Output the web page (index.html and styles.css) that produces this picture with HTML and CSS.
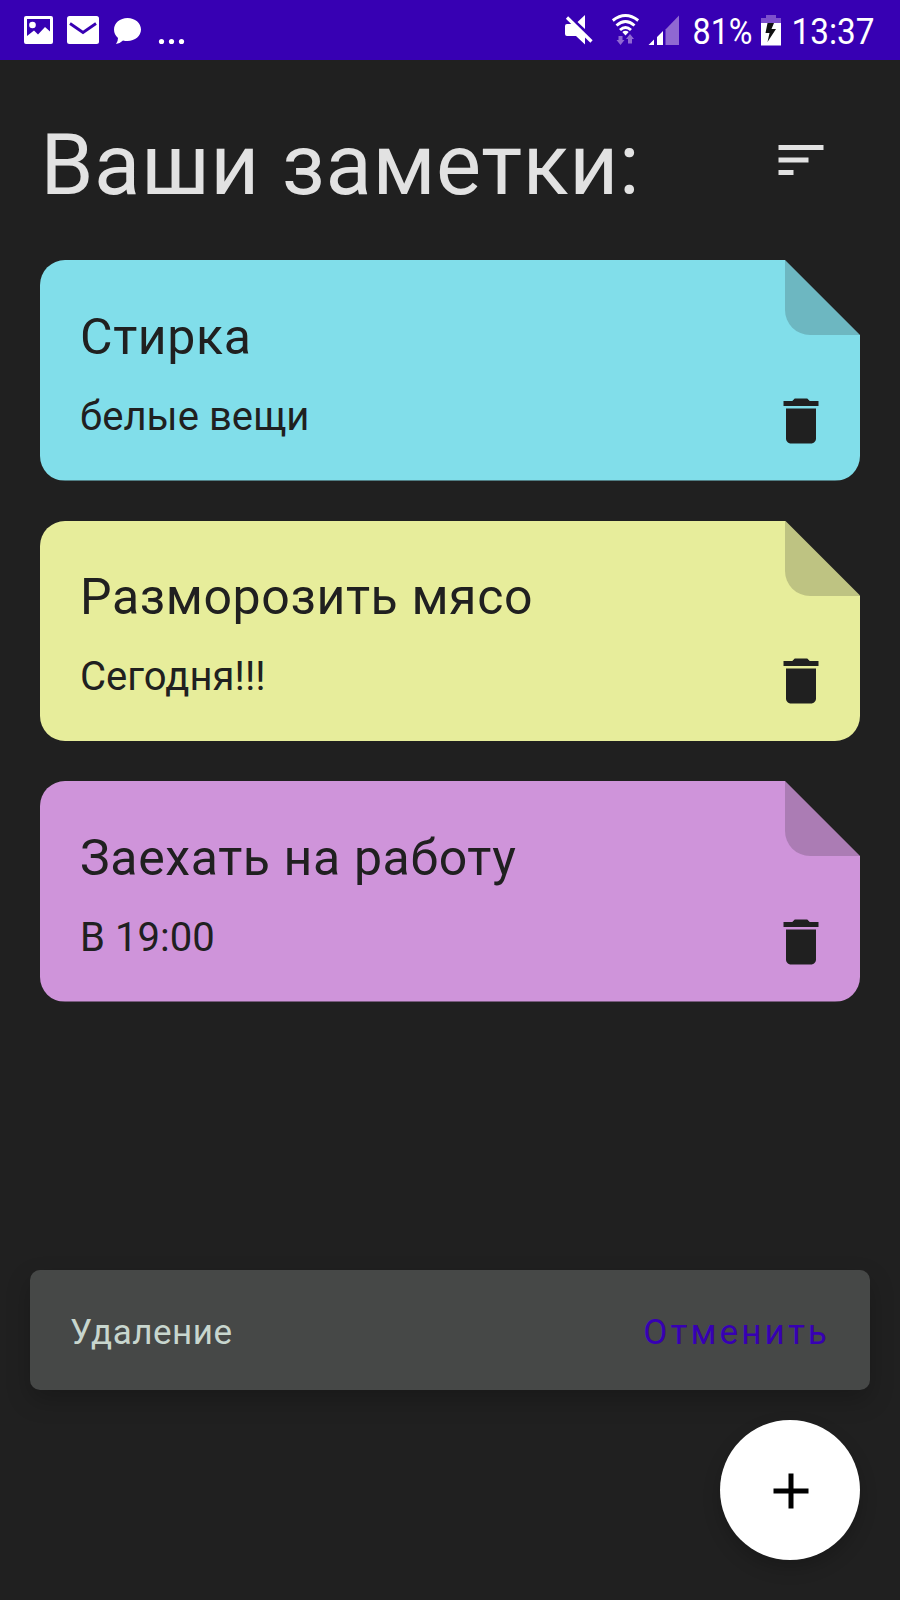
FILE: index.html
```html
<!DOCTYPE html>
<html lang="ru">
<head>
<meta charset="utf-8">
<title>Ваши заметки</title>
<link rel="stylesheet" href="styles.css">
</head>
<body>
<svg class="defs" width="0" height="0">
  <symbol id="trash" viewBox="0 0 24 24"><path d="M6 19c0 1.1.9 2 2 2h8c1.1 0 2-.9 2-2V7H6v12zM19 4h-3.5l-1-1h-5l-1 1H5v2h14V4z"/></symbol>
</svg>
<div class="app">
  <div class="status">
    <svg class="status-left" width="200" height="60" viewBox="0 0 200 60" fill="#fff">
      <path fill-rule="evenodd" d="M26 16h25q2 0 2 2v24q0 2-2 2H26q-2 0-2-2V18q0-2 2-2zM27 19v17l7-5.500 4 4 7-7.500 5 4.500V19z"/>
      <circle cx="32.500" cy="25" r="3.300"/>
      <rect x="67" y="16" width="32" height="28" rx="2.500"/>
      <path d="M70 23.500L83 32.500L96 23.500" fill="none" stroke="#3700b3" stroke-width="2.800"/>
      <path d="M127.500 18C135 18 141 23 141 29.500S135 41 127.500 41Q125 41 123 40.500Q120 43.500 116 44Q118 41.500 118 38Q114 34.500 114 29.500C114 23 120 18 127.500 18z"/>
      <circle cx="161.500" cy="41.500" r="2.600"/><circle cx="171.500" cy="41.500" r="2.600"/><circle cx="181.500" cy="41.500" r="2.600"/>
    </svg>
    <svg class="status-right" width="340" height="60" viewBox="560 0 340 60" fill="#fff">
      <path d="M565 26q0-2 2-2h6.500L585 35.500V44.500l-9-8.500h-9q-2 0-2-2zM577.500 22l7.500-7v14z"/>
      <path d="M567 17.500L591.500 41.500" fill="none" stroke="#fff" stroke-width="3.200"/>
      <g fill="none" stroke="#fff" stroke-width="2.900">
        <path d="M612.800 20.500Q625.500 10.500 638.200 20.500"/>
        <path d="M616.500 25.500Q625.500 17.500 634.500 25.500"/>
        <path d="M620 30Q625.500 25 631 30"/>
      </g>
      <path d="M622.300 32Q625.500 29.500 628.700 32L625.500 35.500z"/>
      <g fill="#8f68d2">
        <path d="M618.500 36h4v4h2l-4 5-4-5h2zM628 43.500v-4.500h-2l4-5 4 5h-2v4.500z"/>
        <path d="M665.500 29.500L679 15.500V45H665.500z"/>
      </g>
      <path d="M648.500 45L654 39.500V45zM657 45V37L663 31V45z"/>
      <text class="status-text" x="692.500" y="44.300" textLength="60" lengthAdjust="spacingAndGlyphs">81%</text>
      <path fill="#7d50cc" d="M761 23v-5h5v-3h10v3h5v5z"/>
      <path d="M761 23h20v22.500h-20z"/>
      <path fill="#111" d="M767.500 23h6.500l-2.500 6h4.500l-8.500 13 2-9h-4z"/>
      <text class="status-text" x="791.500" y="44.300" textLength="83" lengthAdjust="spacingAndGlyphs">13:37</text>
    </svg>
  </div>
  <header class="header">
    <h1 class="title">Ваши заметки:</h1>
    <svg class="icon sort" viewBox="0 0 24 24"><path d="M3 18h6v-2H3v2zM3 6v2h18V6H3zm0 7h12v-2H3v2z"/></svg>
  </header>
  <main class="notes">
    <article class="note note-cyan">
      <div class="note-text"><h2 class="note-title">Стирка</h2><p class="note-body">белые вещи</p></div>
      <div class="note-side"><span class="fold"></span><svg class="icon"><use href="#trash"/></svg></div>
    </article>
    <article class="note note-lime">
      <div class="note-text"><h2 class="note-title">Разморозить мясо</h2><p class="note-body">Сегодня!!!</p></div>
      <div class="note-side"><span class="fold"></span><svg class="icon"><use href="#trash"/></svg></div>
    </article>
    <article class="note note-violet">
      <div class="note-text"><h2 class="note-title">Заехать на работу</h2><p class="note-body">В 19:00</p></div>
      <div class="note-side"><span class="fold"></span><svg class="icon"><use href="#trash"/></svg></div>
    </article>
  </main>
  <div class="snackbar">
    <span class="snackbar-text">Удаление</span>
    <span class="snackbar-action">Отменить</span>
  </div>
  <div class="fab"><svg class="icon" viewBox="0 0 24 24"><path d="M19 13h-6v6h-2v-6H5v-2h6V5h2v6h6v2z"/></svg></div>
</div>
</body>
</html>
```
FILE: styles.css
```css
* { box-sizing: border-box; margin: 0; padding: 0; }
body { background: #202020; font-family: Roboto, sans-serif; }
.defs { display: none; }
.app {
  width: 900px;
  height: 1600px;
  display: flex;
  flex-direction: column;
  background: #202020;
  overflow: hidden;
}
.status {
  flex: none;
  height: 60px;
  background: #3700b3;
  display: flex;
  justify-content: space-between;
}
.status-text { font: 400 37px Roboto, sans-serif; }
.icon { display: block; width: 60px; height: 60px; fill: #202020; flex: none; }
.header {
  flex: none;
  height: 200px;
  padding: 55px 69.5px 0 40.5px;
  display: flex;
  justify-content: space-between;
  align-items: flex-start;
}
.title {
  font-size: 85px;
  line-height: 100px;
  font-weight: 400;
  letter-spacing: 0.625px;
  color: #e2e2e2;
  white-space: nowrap;
}
.sort { fill: #e2e2e2; margin-top: 15px; }
.notes { flex: none; padding: 0 40px; display: flex; flex-direction: column; gap: 40px; }
.note {
  height: 220.5px;
  display: flex;
  justify-content: space-between;
  border-radius: 25px;
  clip-path: polygon(0 0, 745px 0, 820px 75px, 100% 100%, 0 100%);
  color: #202020;
}
.note-cyan { background: #81deea; }
.note-lime { background: #e7ed9b; }
.note-violet { background: #cf94da; }
.note-text {
  padding: 46.5px 0 0 40px;
  display: flex;
  flex-direction: column;
  gap: 26px;
  white-space: nowrap;
}
.note-title { font-size: 50px; line-height: 60px; font-weight: 400; letter-spacing: 0.625px; }
.note-body { font-size: 40px; line-height: 48px; letter-spacing: 0.05px; }
.note-side { width: 89.5px; display: flex; flex-direction: column; gap: 55.5px; }
.fold {
  width: 75px;
  height: 75px;
  margin-left: 14.5px;
  background: rgba(32, 32, 32, 0.2);
  border-bottom-left-radius: 25px;
}
.snackbar {
  flex: none;
  margin: 268.500px 30px 0;
  height: 120px;
  padding: 4px 40px 0;
  border-radius: 10px;
  background: #464847;
  box-shadow: 0 10px 24px rgba(0, 0, 0, 0.22);
  display: flex;
  justify-content: space-between;
  align-items: center;
  font-size: 35px;
}
.snackbar-text { color: #c8d6ce; letter-spacing: 0.5px; }
.snackbar-action { color: #3700b3; letter-spacing: 3.125px; }
.fab {
  flex: none;
  margin: 30px 40px 0 auto;
  width: 140px;
  height: 140px;
  border-radius: 50%;
  background: #fff;
  box-shadow: 0 8px 18px rgba(0, 0, 0, 0.2);
  display: flex;
  align-items: center;
  justify-content: center;
}
.fab .icon { fill: #000; margin: 1px 0 0 1px; }
```
